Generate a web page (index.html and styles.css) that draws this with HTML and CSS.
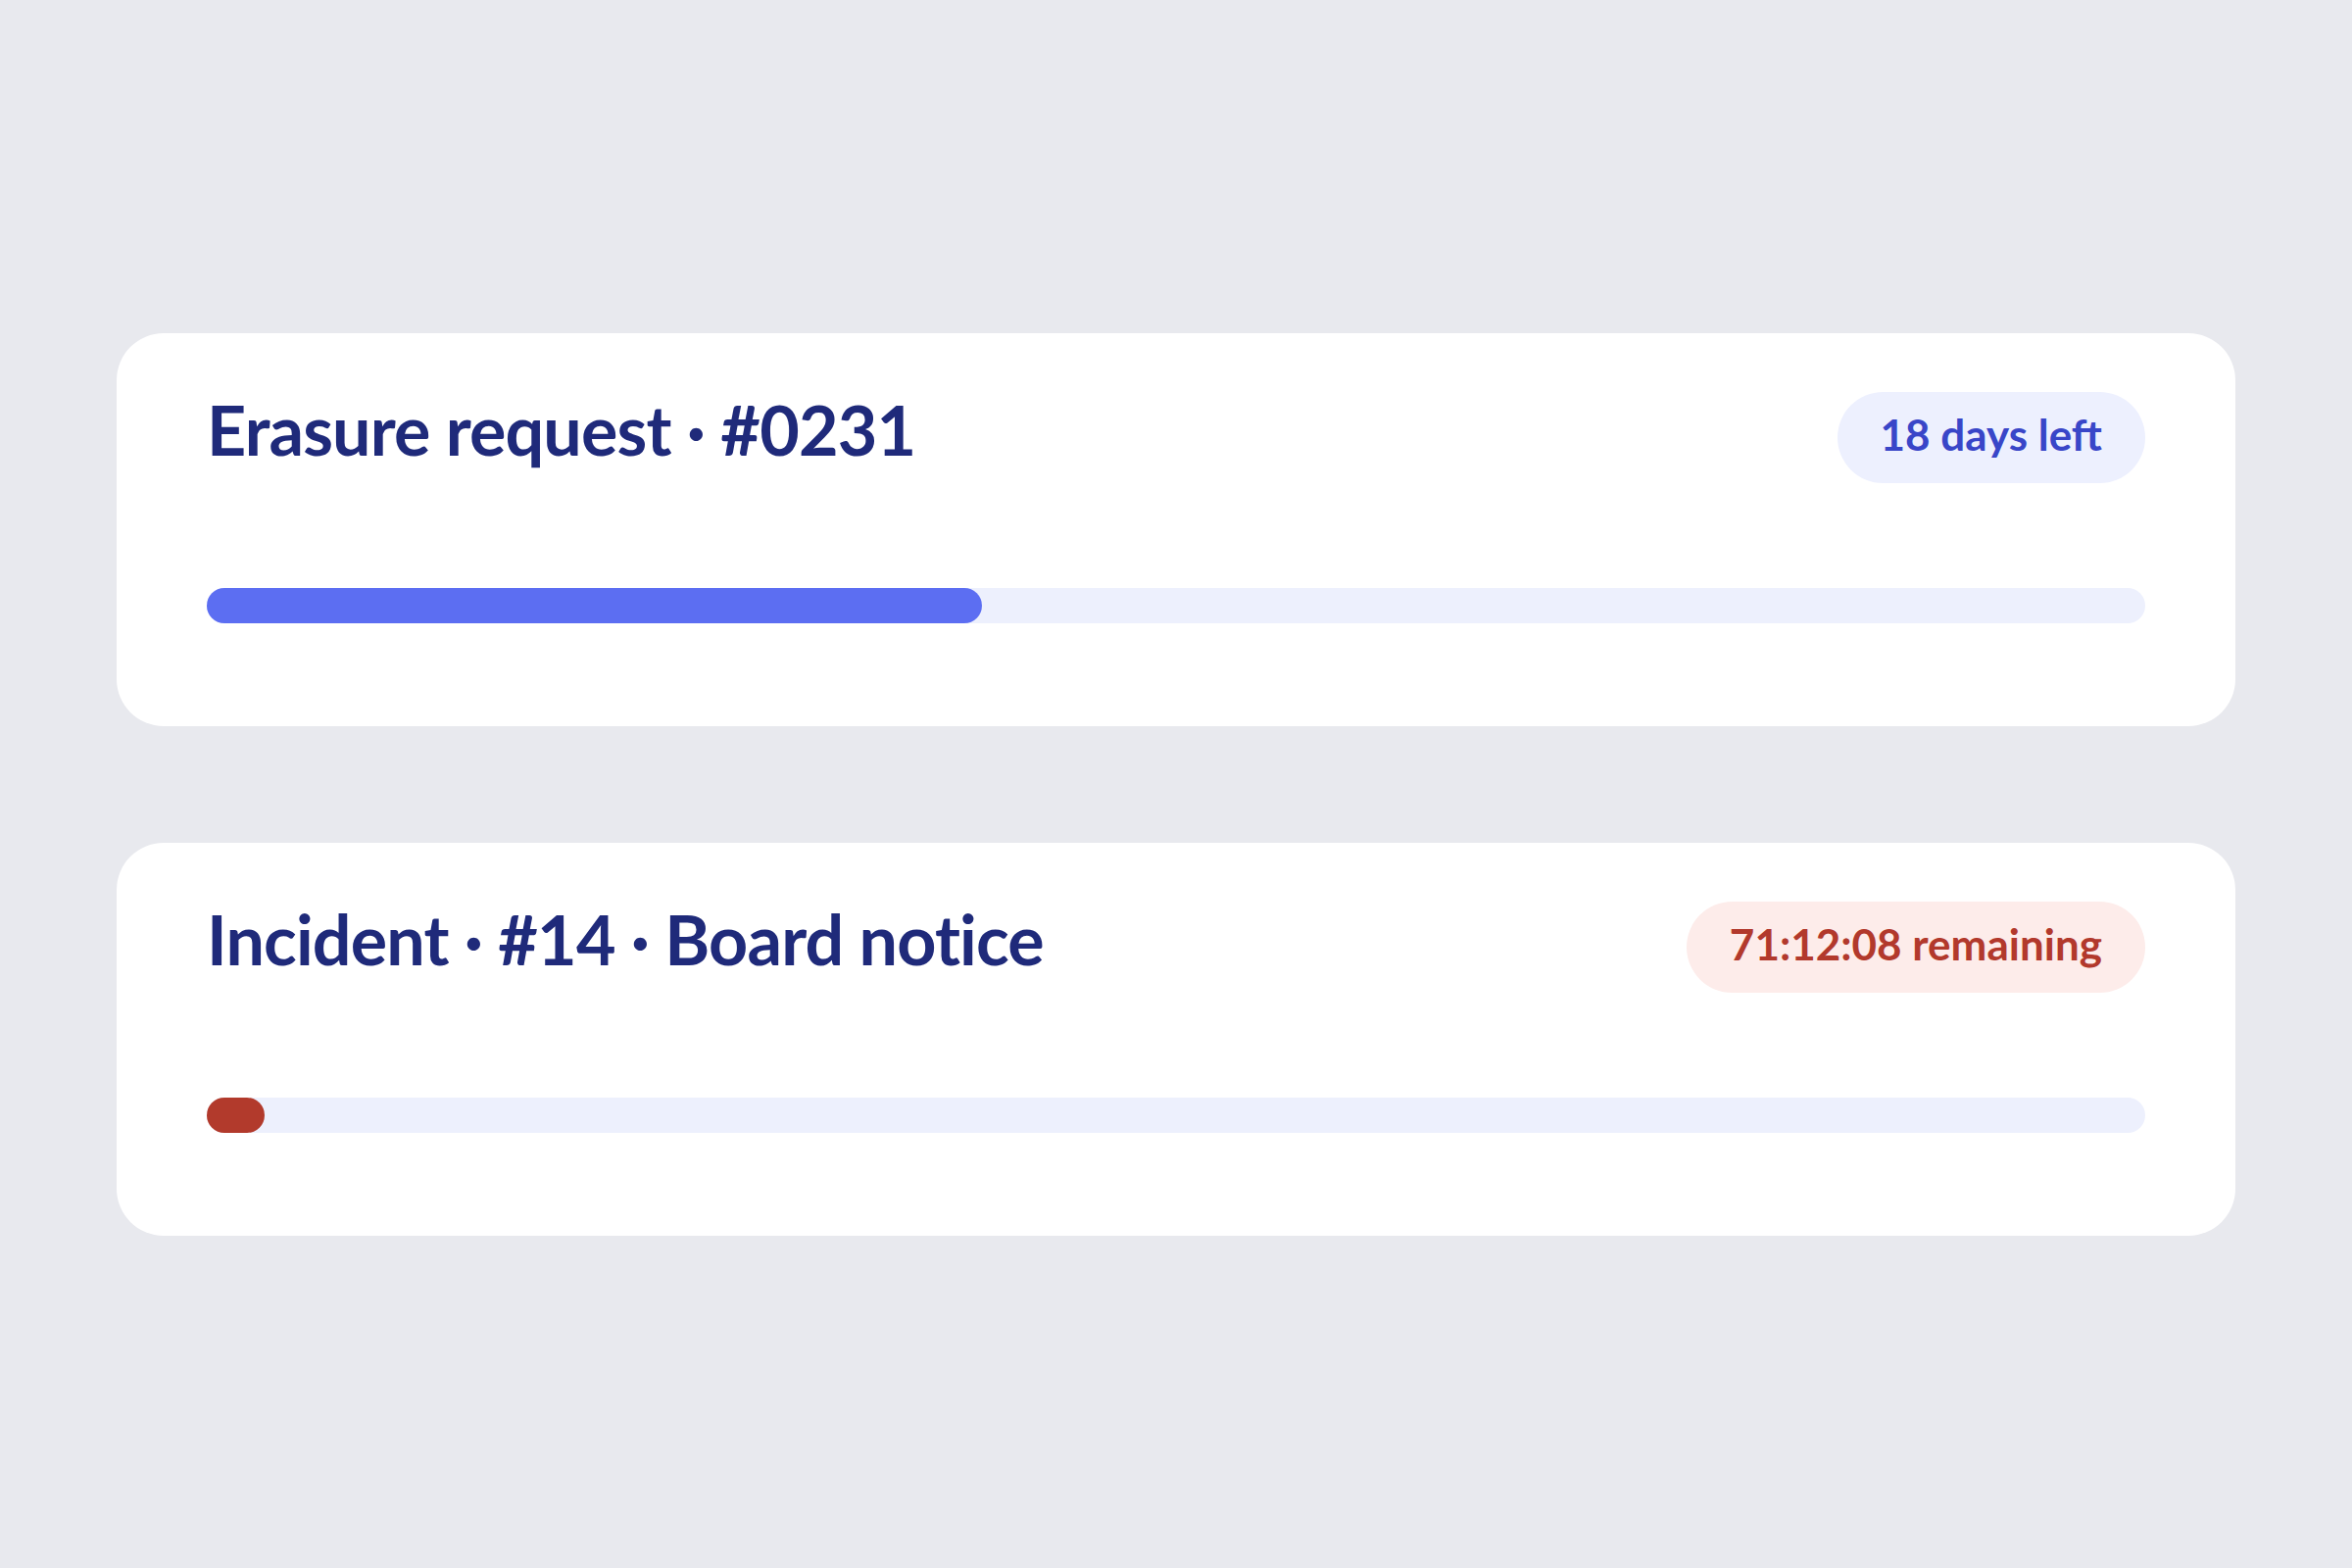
FILE: index.html
```html
<!DOCTYPE html>
<html lang="en">

<head>
    <meta charset="UTF-8">
    <meta name="viewport" content="width=device-width, initial-scale=1.0">
    <title>Deadlines</title>
    <link rel="stylesheet" href="styles.css">
</head>

<body>

    <div class="list">
        <div class="card">
            <div class="card-head">
                <h2 class="title">Erasure request · #0231</h2>
                <span class="badge">18 days left</span>
            </div>
            <div class="track">
                <div class="fill" style="width: 40%"></div>
            </div>
        </div>

        <div class="card urgent">
            <div class="card-head">
                <h2 class="title">Incident · #14 · Board notice</h2>
                <span class="badge">71:12:08 remaining</span>
            </div>
            <div class="track">
                <div class="fill" style="width: 3%"></div>
            </div>
        </div>
    </div>

</body>

</html>
```

FILE: styles.css
```css
body {
    margin: 0;
    background: #e8e9ee;
    font-family: Lato, "Noto Sans", sans-serif;
    height: 1600px;
}

.list {
    display: flex;
    flex-direction: column;
    gap: 119px;
    padding: 340px 119px 0;
}

.card {
    background: #ffffff;
    border-radius: 48px;
    padding: 56px 92px 105px;
}

.card-head {
    display: flex;
    justify-content: space-between;
    align-items: flex-start;
}

.title {
    margin: 0;
    font-size: 70px;
    font-weight: 700;
    line-height: 1.2;
    letter-spacing: -0.012em;
    color: #1f2a7a;
}

.badge {
    margin-top: 4px;
    height: 93px;
    box-sizing: border-box;
    padding: 0 44px 8px;
    display: flex;
    align-items: center;
    border-radius: 47px;
    font-size: 44px;
    font-weight: 700;
    background: #edf0fe;
    color: #3946c8;
}

.track {
    margin-top: 107px;
    height: 36px;
    border-radius: 18px;
    background: #edf0fd;
}

.fill {
    height: 100%;
    border-radius: 18px;
    background: #5c6ef2;
}

.urgent .badge {
    background: #fdecea;
    color: #b2392c;
}

.urgent .fill {
    background: #b23a2c;
}
```
